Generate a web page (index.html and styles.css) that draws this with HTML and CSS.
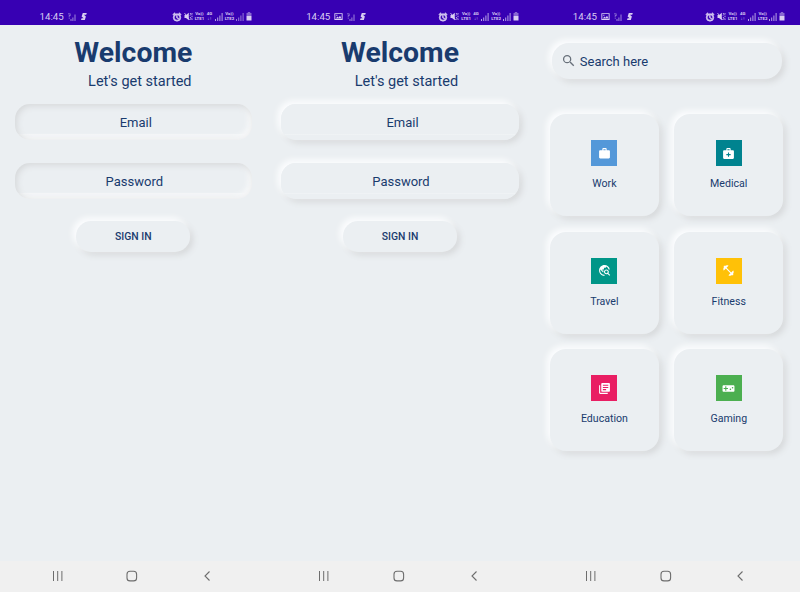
FILE: index.html
```
<!DOCTYPE html>
<html lang="en">
<head>
<meta charset="utf-8">
<title>Neumorphic screens</title>
<link rel="stylesheet" href="styles.css">
</head>
<body>
<svg class="sprite" aria-hidden="true">
  <symbol id="image" viewBox="0 0 24 24"><path fill-rule="evenodd" d="M1 3h22v18H1zM3.500 5.500v13h17v-13zM5 17l4-5 3 3 4-5 4 7zM6 7h3v3H6z"/></symbol>
  <symbol id="nosim" viewBox="0 0 8 8"><path d="M0 .5h2.500v2.500H1.500v1.500H.8V2.300h1V1.200H0zM.8 5h.8v.8H.8zM2.500 6h1v2h-1zM4.400 4.500h1V8h-1zM6.500 1.500h1V8h-1z"/></symbol>
  <symbol id="swift" viewBox="0 0 8 9"><path d="M2.800 1h4L6.200 2.700H3.900l2 1.800L4.800 8H1l.6-1.700h2L1.600 4.500z"/></symbol>
  <symbol id="alarm" viewBox="0 0 24 24"><path d="M22 5.720l-4.600-3.860-1.290 1.530 4.600 3.860zM7.880 3.390L6.600 1.860 2 5.710l1.290 1.530zM12.500 8H11v6l4.750 2.850.75-1.230-4-2.370zM12 4a9 9 0 1 0 0 18 9 9 0 0 0 0-18zm0 15.500a6.500 6.500 0 1 1 0-13 6.500 6.500 0 0 1 0 13z" stroke="currentColor" stroke-width="1.500"/></symbol>
  <symbol id="mute" viewBox="0 0 9 9"><path d="M.5 3h1.500L4.800.8v7.400L2 6H.5z"/><path d="M.5 1l5 7M6 1l1 1.300-1 1.300M6 5l1 1.300L6 7.800M8 1v1.500M8 3.700v1.500M8 6.500V8" fill="none" stroke="currentColor" stroke-width=".8"/></symbol>
  <symbol id="signal" viewBox="0 0 8 8"><path d="M0 6h1v2H0zM2.200 4.500h1V8h-1zM4.400 2.500h1V8h-1zM6.600 0h1v8h-1z"/></symbol>
  <symbol id="battery" viewBox="0 0 6 9"><path opacity=".5" d="M1.800 0h2.400v1H5.500v3h-5V1h1.300z"/><path d="M.5 4h5v4.500h-5z"/></symbol>
  <symbol id="search" viewBox="0 0 24 24"><path d="M15.500 14h-.79l-.28-.27A6.470 6.470 0 0 0 16 9.500 6.500 6.500 0 1 0 9.500 16c1.610 0 3.090-.59 4.230-1.570l.27.28v.79l5 4.990L20.490 19zm-6 0a4.500 4.500 0 1 1 0-9 4.500 4.500 0 0 1 0 9z"/></symbol>
  <symbol id="work" viewBox="0 0 24 24"><path d="M20 6h-4V4c0-1.110-.89-2-2-2h-4c-1.110 0-2 .89-2 2v2H4c-1.110 0-2 .89-2 2v11c0 1.110.89 2 2 2h16c1.110 0 2-.89 2-2V8c0-1.110-.89-2-2-2zm-6 0h-4V4h4z"/></symbol>
  <symbol id="medical" viewBox="0 0 24 24"><path fill-rule="evenodd" d="M20 6h-4V4c0-1.110-.89-2-2-2h-4c-1.110 0-2 .89-2 2v2H4c-1.110 0-2 .89-2 2v12c0 1.110.89 2 2 2h16c1.110 0 2-.89 2-2V8c0-1.110-.89-2-2-2zM10 4h4v2h-4zM16 15h-3v3h-2v-3H8v-2h3v-3h2v3h3z"/></symbol>
  <symbol id="travel" viewBox="0 0 24 24"><path d="M19.300 16.900c.4-.7.700-1.500.700-2.400 0-2.500-2-4.500-4.500-4.500S11 12 11 14.500s2 4.500 4.500 4.500c.9 0 1.700-.3 2.400-.7l3.200 3.200 1.400-1.400zM15.500 17a2.500 2.500 0 1 1 0-5 2.500 2.500 0 0 1 0 5zM12 20v2C6.480 22 2 17.520 2 12S6.480 2 12 2c4.840 0 8.870 3.440 9.800 8h-2.070A8 8 0 0 0 15 4.590V5c0 1.100-.9 2-2 2h-2v2c0 .55-.45 1-1 1H8v2h2v3H9l-4.790-4.790C4.080 10.790 4 11.380 4 12c0 4.410 3.590 8 8 8z"/></symbol>
  <symbol id="fitness" viewBox="0 0 24 24"><path d="M20.570 14.860L22 13.430 20.570 12 17 15.570 8.430 7 12 3.430 10.570 2 9.140 3.430 7.710 2 5.570 4.140 4.140 2.710 2.710 4.140l1.430 1.430L2 7.710l1.430 1.430L2 10.570 3.430 12 7 8.430 15.570 17 12 20.570 13.430 22l1.430-1.430L16.290 22l2.140-2.140 1.430 1.430 1.430-1.430-1.430-1.430L22 16.290z"/></symbol>
  <symbol id="education" viewBox="0 0 24 24"><path fill-rule="evenodd" d="M4 6H2v14c0 1.100.9 2 2 2h14v-2H4zM20 2H8c-1.100 0-2 .9-2 2v12c0 1.100.9 2 2 2h12c1.100 0 2-.9 2-2V4c0-1.100-.9-2-2-2zM19 11H9V9h10zM15 15H9v-2h6zM19 7H9V5h10z"/></symbol>
  <symbol id="gaming" viewBox="0 0 24 24"><path fill-rule="evenodd" d="M21 6H3c-1.100 0-2 .9-2 2v8c0 1.100.9 2 2 2h18c1.100 0 2-.9 2-2V8c0-1.100-.9-2-2-2zM11 13H8v3H6v-3H3v-2h3V8h2v3h3zM15.500 15a1.500 1.500 0 1 1 0-3 1.500 1.500 0 0 1 0 3zM19.500 12a1.500 1.500 0 1 1 0-3 1.500 1.500 0 0 1 0 3z"/></symbol>
  <symbol id="recents" viewBox="0 0 12 12"><path d="M1.500 1v10M5.700 1v10M9.900 1v10" fill="none" stroke="currentColor"/></symbol>
  <symbol id="home" viewBox="0 0 12 12"><rect x="1" y="1.300" width="9.600" height="9.600" rx="3" fill="none" stroke="currentColor" stroke-width="1.100"/></symbol>
  <symbol id="back" viewBox="0 0 12 12"><path d="M8.500 1.500L4 6l4.500 4.500" fill="none" stroke="currentColor" stroke-width="1.100"/></symbol>
</svg>

<main class="screens">
  <section class="screen">
    <header class="status">
      <span class="time">14:45</span>
      <svg class="s-sim"><use href="#nosim"/></svg>
      <svg class="s-swift"><use href="#swift"/></svg>
      <div class="status-right">
        <svg class="s-alarm"><use href="#alarm"/></svg>
        <svg class="s-mute"><use href="#mute"/></svg>
        <span class="tiny lte">Vo))<br>LTE1</span>
        <span class="tiny net">4G<br>↓↑</span>
        <svg class="s-signal"><use href="#signal"/></svg>
        <span class="tiny lte">Vo))<br>LTE2</span>
        <svg class="s-signal dim"><use href="#signal"/></svg>
        <svg class="s-battery"><use href="#battery"/></svg>
      </div>
    </header>
    <div class="login">
      <h1>Welcome</h1>
      <p class="subtitle">Let's get started</p>
      <div class="field inset email"><span>Email</span></div>
      <div class="field inset"><span>Password</span></div>
      <button class="signin">SIGN IN</button>
    </div>
    <nav class="navbar">
      <svg><use href="#recents"/></svg><svg><use href="#home"/></svg><svg><use href="#back"/></svg>
    </nav>
  </section>

  <section class="screen">
    <header class="status">
      <span class="time">14:45</span>
      <svg class="s-image"><use href="#image"/></svg>
      <svg class="s-sim"><use href="#nosim"/></svg>
      <svg class="s-swift"><use href="#swift"/></svg>
      <div class="status-right">
        <svg class="s-alarm"><use href="#alarm"/></svg>
        <svg class="s-mute"><use href="#mute"/></svg>
        <span class="tiny lte">Vo))<br>LTE1</span>
        <span class="tiny net">4G<br>↓↑</span>
        <svg class="s-signal"><use href="#signal"/></svg>
        <span class="tiny lte">Vo))<br>LTE2</span>
        <svg class="s-signal"><use href="#signal"/></svg>
        <svg class="s-battery"><use href="#battery"/></svg>
      </div>
    </header>
    <div class="login">
      <h1>Welcome</h1>
      <p class="subtitle">Let's get started</p>
      <div class="field raised email"><span>Email</span></div>
      <div class="field raised"><span>Password</span></div>
      <button class="signin">SIGN IN</button>
    </div>
    <nav class="navbar">
      <svg><use href="#recents"/></svg><svg><use href="#home"/></svg><svg><use href="#back"/></svg>
    </nav>
  </section>

  <section class="screen">
    <header class="status">
      <span class="time">14:45</span>
      <svg class="s-image"><use href="#image"/></svg>
      <svg class="s-sim"><use href="#nosim"/></svg>
      <svg class="s-swift"><use href="#swift"/></svg>
      <div class="status-right">
        <svg class="s-alarm"><use href="#alarm"/></svg>
        <svg class="s-mute"><use href="#mute"/></svg>
        <span class="tiny lte">Vo))<br>LTE1</span>
        <span class="tiny net">4G<br>↓↑</span>
        <svg class="s-signal"><use href="#signal"/></svg>
        <span class="tiny lte">Vo))<br>LTE2</span>
        <svg class="s-signal"><use href="#signal"/></svg>
        <svg class="s-battery"><use href="#battery"/></svg>
      </div>
    </header>
    <div class="dashboard">
      <div class="search"><svg><use href="#search"/></svg><span>Search here</span></div>
      <div class="cards">
        <div class="card"><div class="tile work"><svg><use href="#work"/></svg></div><span>Work</span></div>
        <div class="card"><div class="tile medical"><svg><use href="#medical"/></svg></div><span>Medical</span></div>
        <div class="card"><div class="tile travel"><svg><use href="#travel"/></svg></div><span>Travel</span></div>
        <div class="card"><div class="tile fitness"><svg><use href="#fitness"/></svg></div><span>Fitness</span></div>
        <div class="card"><div class="tile education"><svg><use href="#education"/></svg></div><span>Education</span></div>
        <div class="card"><div class="tile gaming"><svg><use href="#gaming"/></svg></div><span>Gaming</span></div>
      </div>
    </div>
    <nav class="navbar">
      <svg><use href="#recents"/></svg><svg><use href="#home"/></svg><svg><use href="#back"/></svg>
    </nav>
  </section>
</main>
</body>
</html>
```
FILE: styles.css
```
* { box-sizing: border-box; }

body {
  margin: 0;
  background: #ebeff2;
  color: #193b6e;
  font-family: Roboto, "Liberation Sans", sans-serif;
}

svg { display: block; flex: none; fill: currentColor; }
.sprite { display: none; }

.screens {
  display: grid;
  grid-template-columns: repeat(3, 1fr);
  height: 592px;
  overflow: hidden;
}

.screen { display: flex; flex-direction: column; min-width: 0; }

/* Status bar */
.status {
  display: flex;
  align-items: center;
  gap: 4px;
  flex: none;
  height: 25px;
  padding: 8px 14.500px 0 39.500px;
  background: #3700b3;
  color: #d9cdf2;
}
.time { font-size: 9.700px; line-height: 12px; width: 24px; white-space: nowrap; }
.s-image { width: 9px; height: 9px; }
.s-sim { width: 8px; height: 8px; opacity: .65; }
.s-swift { width: 8px; height: 9px; }
.status-right { display: flex; align-items: center; gap: 2px; margin-left: auto; }
.s-alarm { width: 10px; height: 10px; }
.s-mute { width: 9px; height: 9px; }
.s-signal { width: 8px; height: 8px; opacity: .8; }
.s-signal.dim { opacity: .6; }
.s-battery { width: 6px; height: 9px; }
.tiny { font-size: 4.400px; line-height: 4.500px; font-weight: 700; text-align: center; white-space: nowrap; }
.lte { width: 9.500px; }
.net { width: 6.500px; }

/* Login screens */
.login {
  display: flex;
  flex: 1;
  flex-direction: column;
  align-items: center;
  padding: 11px 14.500px 0;
}
h1 { margin: 0; font-size: 28.400px; line-height: 34px; font-weight: 700; }
.subtitle { margin: 3px 0 0 13px; font-size: 14.500px; line-height: 17px; }

.field {
  width: 100%;
  height: 36px;
  margin-top: 14px;
  border-radius: 15px;
  font-size: 13px;
  line-height: 38px;
  text-align: center;
}
.field + .field { margin-top: 22.500px; }
.field span { margin-left: 2px; }
.field.email span { margin-left: 5px; }

.inset {
  background: linear-gradient(#0000 29.500px, #ffffff60 30.500px, #ffffff30 32px, #ffffff50);
  box-shadow: inset 2px 2px 6px #d6d8da, inset -4px -3px 5px #f7f8f9;
}
.raised { background: linear-gradient(#ebeff2 29.500px, #f1f4f6 30px, #ebeff2 31.500px); }
.raised, .signin, .search, .card { box-shadow: -3px -3px 6px #fdfeff, 3px 3px 6px #d6d8da; }

.signin {
  width: 114px;
  height: 31px;
  margin-top: 22px;
  padding: 1px 0 0;
  border: 0;
  border-radius: 15px;
  background: #ebeff2;
  color: inherit;
  font: 500 10.400px/30px Roboto, "Liberation Sans", sans-serif;
}

/* Dashboard */
.dashboard { flex: 1; padding: 18px 16.800px 0 16.700px; }
.search {
  display: flex;
  align-items: center;
  gap: 3.500px;
  width: 230.500px;
  height: 36px;
  margin-left: 1.800px;
  padding-left: 9px;
  border-radius: 17px;
  font-size: 13px;
}
.search svg { width: 15.500px; height: 15.500px; color: #68707a; }

.cards {
  display: grid;
  grid-template-columns: 1fr 1fr;
  grid-auto-rows: 102px;
  gap: 15.500px;
  margin-top: 35px;
}
.card {
  display: flex;
  flex-direction: column;
  align-items: center;
  padding-top: 26px;
  border-radius: 16px;
  background: #ebeff2;
  font-size: 10.600px;
  line-height: 14px;
}
.card span { margin-top: 11px; }
.tile {
  display: grid;
  place-items: center;
  width: 26px;
  height: 26px;
  color: #fff;
}
.tile svg { width: 13px; height: 13px; }
.work { background: #5498d9; }
.medical { background: #00838f; }
.travel { background: #009688; }
.fitness { background: #ffc107; }
.education { background: #e91e63; }
.gaming { background: #4caf50; }

/* System navigation */
.navbar {
  display: flex;
  align-items: center;
  justify-content: space-between;
  flex: none;
  height: 31px;
  padding: 0 53.500px 1px 51.500px;
  background: #f0f0f0;
  color: #6d6d6d;
}
.navbar svg { width: 12px; height: 12px; }
```
